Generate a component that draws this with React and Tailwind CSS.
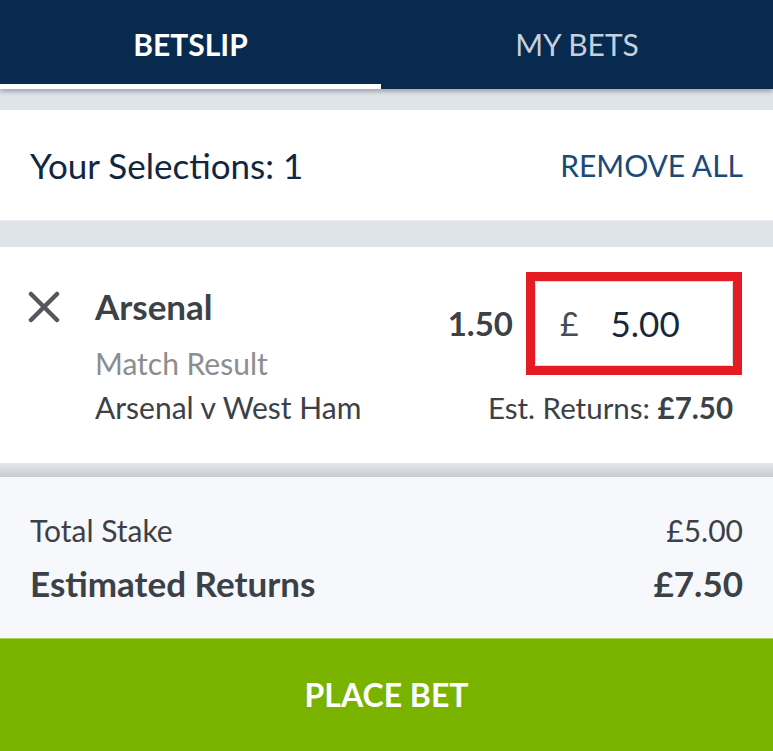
import React from 'react';

const Betslip = () => {
  return (
    <div className="w-[773px] h-[751px] overflow-hidden bg-[#dfe3ea] font-['Lato',sans-serif] flex flex-col">
      {/* Tabs */}
      <div className="flex bg-[#082a4f] h-[89px] shadow-[0_3px_4px_rgba(0,0,0,0.25)] relative z-10">
        <div className="w-[381px] flex items-center justify-center border-b-[5px] border-white pt-[5px] text-white text-[30px] font-bold">
          BETSLIP
        </div>
        <div className="flex-1 flex items-center justify-center pb-[1px] text-[#c5d0de] text-[30px]">
          MY BETS
        </div>
      </div>

      {/* Selections header */}
      <div className="mt-[21px] h-[111px] bg-white border-b border-[#eceef2] flex items-center justify-between pl-[30px] pr-[30px]">
        <span className="text-[#11263f] text-[35px]">Your Selections: 1</span>
        <button className="text-[#1b4a78] text-[30px]">REMOVE ALL</button>
      </div>

      {/* Selection */}
      <div className="mt-[26px] h-[216px] bg-white flex pl-[28px] pr-[31px] pt-[25px]">
        <svg width="32" height="32" viewBox="0 0 32 32" className="mt-[19px] shrink-0">
          <path d="M3 3 L29 29 M29 3 L3 29" stroke="#54585d" strokeWidth="4.5" strokeLinecap="round" />
        </svg>
        <div className="ml-[35px] flex flex-col pt-[17px] text-[#3c4147]">
          <span className="text-[35px] font-bold leading-none">Arsenal</span>
          <span className="mt-[24px] text-[30px] text-[#8b8d90] leading-none">Match Result</span>
          <span className="mt-[14px] text-[30px] leading-none">Arsenal v West Ham</span>
        </div>
        <div className="ml-auto flex flex-col items-end">
          <div className="flex items-center">
            <span className="text-[33px] font-bold text-[#3c4147] mr-[13px]">1.50</span>
            <div className="w-[216px] h-[103px] border-[9px] border-[#e41b23] bg-white">
              <div className="w-full h-full rounded-[3px] border border-[#d9dce1] flex items-center pl-[24px] text-[35px]">
                <span className="text-[#474c52] text-[32px]">£</span>
                <span className="ml-[32px] text-[#17283c]">5.00</span>
              </div>
            </div>
          </div>
          <div className="mt-[18px] mr-[9px] text-[29.5px] text-[#3c4147] leading-none">
            Est. Returns: <span className="font-bold">£7.50</span>
          </div>
        </div>
      </div>

      {/* Totals */}
      <div className="h-[14px] bg-gradient-to-b from-[#e6e8ec] to-[#c7cad0]" />
      <div className="h-[161px] bg-[#f7f8fb] flex flex-col pt-[38px] px-[30px] text-[#3c4147]">
        <div className="flex justify-between text-[30px] leading-none">
          <span>Total Stake</span>
          <span>£5.00</span>
        </div>
        <div className="mt-[21px] flex justify-between text-[35px] font-bold leading-none">
          <span>Estimated Returns</span>
          <span>£7.50</span>
        </div>
      </div>

      {/* Place bet */}
      <button className="flex-1 bg-[#79b300] border-t border-[#a8d25a] text-white text-[32px] font-bold flex items-center justify-center">
        PLACE BET
      </button>
    </div>
  );
};

export default function App() {
  return <Betslip />;
}
